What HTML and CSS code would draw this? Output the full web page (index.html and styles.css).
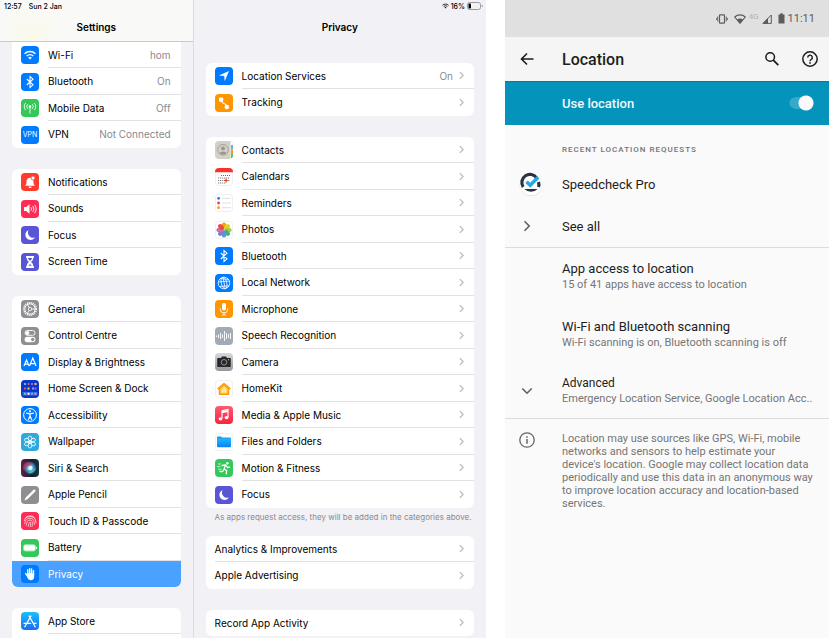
FILE: index.html
```html
<!DOCTYPE html>
<html lang="en">
<head>
<meta charset="utf-8">
<meta name="viewport" content="width=device-width, initial-scale=1">
<title>Privacy and location settings</title>
<link rel="stylesheet" href="styles.css">
</head>
<body>
<svg class="defs" aria-hidden="true">
  <defs>
    <linearGradient id="g-store" x2="0" y2="1"><stop stop-color="#1bc0fb"/><stop offset="1" stop-color="#1b6cf2"/></linearGradient>
    <linearGradient id="g-folder" x2="0" y2="1"><stop stop-color="#22b4fb"/><stop offset="1" stop-color="#0a84f5"/></linearGradient>
    <linearGradient id="g-home" x2="0" y2="1"><stop stop-color="#ffa31a"/><stop offset="1" stop-color="#ff9410"/></linearGradient>
    <radialGradient id="g-siri"><stop stop-color="#e8fbff"/><stop offset=".35" stop-color="#5cc4d8"/><stop offset=".7" stop-color="#3a6a9c"/><stop offset="1" stop-color="#241c3c"/></radialGradient>
  </defs>
  <symbol id="i-wifi" viewBox="0 0 18 18"><g fill="none" stroke="#fff" stroke-width="1.5"><path d="M3.6 7.7a7.7 7.7 0 0 1 10.8 0"/><path d="M5.7 10a4.8 4.8 0 0 1 6.6 0"/></g><path d="M9 13.6 7.2 11.7a2.6 2.6 0 0 1 3.6 0z" fill="#fff"/></symbol>
  <symbol id="i-bt" viewBox="0 0 18 18"><path d="M5.8 6 12 11.8 9 14.6V3.4l3 2.8L5.8 12" fill="none" stroke="#fff" stroke-width="1.1"/></symbol>
  <symbol id="i-moon" viewBox="0 0 18 18"><path d="M7.6 4a5.2 5.2 0 1 0 6.4 7.5A5.3 5.3 0 0 1 7.6 4z" fill="#fff"/></symbol>
  <symbol id="i-chev" viewBox="0 0 6 10"><path d="M1 1l4 4-4 4" fill="none" stroke="#b5b5b9" stroke-width="1.3"/></symbol>
</svg>

<div class="tablet">
  <aside class="sidebar">
    <header class="bar bar-side">
      <div class="status"><span>12:57</span><span>Sun 2 Jan</span></div>
      <h1 class="title">Settings</h1>
    </header>
    <nav class="groups">
      <div class="card card-first">
        <a class="row" href="#"><svg class="icon blue"><use href="#i-wifi"/></svg><span class="label">Wi-Fi<span class="value">hom</span></span></a>
        <a class="row" href="#"><svg class="icon blue"><use href="#i-bt"/></svg><span class="label">Bluetooth<span class="value">On</span></span></a>
        <a class="row" href="#"><svg class="icon green" viewBox="0 0 18 18"><g fill="none" stroke="#fff" stroke-width=".9"><path d="M9 8v6.5M6.7 5.3a3.4 3.4 0 0 0 0 4.5M11.3 5.3a3.4 3.4 0 0 1 0 4.5M4.7 4a5.2 5.2 0 0 0 0 7.2M13.3 4a5.2 5.2 0 0 1 0 7.2"/></g><circle cx="9" cy="7.5" r="1.3" fill="#fff"/></svg><span class="label">Mobile Data<span class="value">Off</span></span></a>
        <a class="row" href="#"><span class="icon blue vpn">VPN</span><span class="label">VPN<span class="value">Not Connected</span></span></a>
      </div>
      <div class="card">
        <a class="row" href="#"><svg class="icon red" viewBox="0 0 18 18"><path d="M4.2 12.8c1.2-1.2 1.2-2.2 1.3-4A3.6 3.6 0 0 1 9 4.8a3.6 3.6 0 0 1 3.5 4c.1 1.8.2 2.8 1.4 4zM7.6 13.4h3a1.5 1.5 0 0 1-3 0z" fill="#fff"/><circle cx="12" cy="5" r="2" fill="#fff" stroke="#ff3b30" stroke-width=".7"/></svg><span class="label">Notifications</span></a>
        <a class="row" href="#"><svg class="icon pink" viewBox="0 0 18 18"><path d="M3 7h2.2l3.3-2.8v9.6L5.2 11H3z" fill="#fff"/><g fill="none" stroke="#fff" stroke-width=".9"><path d="M10 7.3a3 3 0 0 1 0 3.4M11.8 6a5 5 0 0 1 0 6M13.6 4.8a7 7 0 0 1 0 8.4"/></g></svg><span class="label">Sounds</span></a>
        <a class="row" href="#"><svg class="icon indigo"><use href="#i-moon"/></svg><span class="label">Focus</span></a>
        <a class="row" href="#"><svg class="icon indigo" viewBox="0 0 18 18"><path d="M5 3h8v1.8h-.8c0 2.2-.7 3-2.2 4.2 1.5 1.2 2.2 2 2.2 4.2h.8V15H5v-1.8h.8c0-2.2.7-3 2.2-4.2-1.5-1.2-2.2-2-2.2-4.2H5z" fill="#fff"/><path d="M7 5h4c0 1.2-1 2-2 2.8C8 7 7 6.2 7 5zM7.3 12.8 9 11l1.7 1.8z" fill="#5856d6"/></svg><span class="label">Screen Time</span></a>
      </div>
      <div class="card">
        <a class="row" href="#"><svg class="icon grey" viewBox="0 0 18 18"><circle cx="9" cy="9" r="6.3" fill="none" stroke="#fff" stroke-width="1.5" stroke-dasharray="1.1 .88"/><circle cx="9" cy="9" r="5.2" fill="none" stroke="#fff" stroke-width="1"/><circle cx="9" cy="9" r="1.7" fill="none" stroke="#fff" stroke-width=".8"/><path d="M10.7 9h3.5M8.2 7.5 6.4 4.5M8.2 10.5l-1.8 3" stroke="#fff" stroke-width=".9"/></svg><span class="label">General</span></a>
        <a class="row" href="#"><svg class="icon grey" viewBox="0 0 18 18"><rect x="4" y="3.5" width="10" height="4.8" rx="2.4" fill="none" stroke="#fff" stroke-width=".9"/><circle cx="6.4" cy="5.9" r="2" fill="#fff"/><rect x="3.6" y="9.8" width="10.8" height="5.4" rx="2.7" fill="#fff"/><circle cx="11.7" cy="12.5" r="1.7" fill="#8e8e93"/></svg><span class="label">Control Centre</span></a>
        <a class="row" href="#"><svg class="icon blue" viewBox="0 0 18 18"><g fill="none" stroke="#fff" stroke-width="1.2"><path d="M3 13l2.5-6L8 13M3.9 11.2h3.2M8.5 13 11.8 5l3.3 8M9.7 10.6h4.2"/></g></svg><span class="label">Display &amp; Brightness</span></a>
        <a class="row" href="#"><svg class="icon navy" viewBox="0 0 18 18"><path d="M3 3h2v2H3zM11 7.5h2v2h-2z" fill="#5fb6f5"/><path d="M6.5 3h2v2h-2zM3 7.5h2v2H3z" fill="#e94b62"/><path d="M10 3h2v2h-2zM13.5 7.5h2v2h-2z" fill="#a25be8"/><path d="M13.5 3h2v2h-2zM6.5 7.5h2v2h-2z" fill="#f5cf39"/><path d="M1.5 12h15v3.5h-15z" fill="#3b63e8"/><path d="M3 12.7h2v2H3z" fill="#61d66a"/><path d="M6.5 12.7h2v2h-2z" fill="#fff"/><path d="M10 12.7h2v2h-2z" fill="#58bafb"/><path d="M13.5 12.7h2v2h-2z" fill="#f2a06b"/></svg><span class="label">Home Screen &amp; Dock</span></a>
        <a class="row" href="#"><svg class="icon blue" viewBox="0 0 18 18"><circle cx="9" cy="9" r="6.4" fill="none" stroke="#fff" stroke-width="1"/><circle cx="9" cy="5.3" r="1.1" fill="#fff"/><path d="M5.3 7.2 9 7.9l3.7-.7M9 7.6v2.5l-1.7 3.6M9 10.1l1.7 3.6" fill="none" stroke="#fff" stroke-width="1.2"/></svg><span class="label">Accessibility</span></a>
        <a class="row" href="#"><svg class="icon cyan" viewBox="0 0 18 18"><g fill="none" stroke="#fff" stroke-width=".8"><ellipse cx="9" cy="5.6" rx="1.9" ry="2.6"/><ellipse cx="9" cy="5.6" rx="1.9" ry="2.6" transform="rotate(60 9 9)"/><ellipse cx="9" cy="5.6" rx="1.9" ry="2.6" transform="rotate(120 9 9)"/><ellipse cx="9" cy="5.6" rx="1.9" ry="2.6" transform="rotate(180 9 9)"/><ellipse cx="9" cy="5.6" rx="1.9" ry="2.6" transform="rotate(240 9 9)"/><ellipse cx="9" cy="5.6" rx="1.9" ry="2.6" transform="rotate(300 9 9)"/><circle cx="9" cy="9" r="1.5"/></g></svg><span class="label">Wallpaper</span></a>
        <a class="row" href="#"><svg class="icon siri" viewBox="0 0 18 18"><circle cx="9" cy="9" r="7" fill="url(#g-siri)"/><path d="M3 5c3-3 6-2 8 0-3 1-6 3-8 7-1.500-2-1.300-5 0-7z" fill="#d3335f" opacity=".65"/><path d="M7 14c4 1 7-2 8-5-2 2-5 3-8 5z" fill="#3fe0b0" opacity=".8"/><circle cx="9.5" cy="9" r="2" fill="#fff" opacity=".8"/></svg><span class="label">Siri &amp; Search</span></a>
        <a class="row" href="#"><svg class="icon grey" viewBox="0 0 18 18"><path d="M3.4 14.6l1.3-3L12.6 3.7c1-1 2.7.7 1.7 1.7L6.4 13.3z" fill="#fff"/></svg><span class="label">Apple Pencil</span></a>
        <a class="row" href="#"><svg class="icon pink" viewBox="0 0 18 18"><g fill="none" stroke="#fff" stroke-width=".8" opacity=".85"><path d="M4 6.5a6 6 0 0 1 10 0M3.2 9a6 6 0 0 1 11.6 0v2.5M3.6 12C4.5 8 5.5 6.3 9 6.3S13.5 9 13.2 13M5.2 13.6C6 10.5 6 8 9 8s2.6 3.5 2 6.8M7 14.7C8 12.5 7.8 10 9 10s.6 3 .2 5"/></g></svg><span class="label">Touch ID &amp; Passcode</span></a>
        <a class="row" href="#"><svg class="icon green" viewBox="0 0 18 18"><rect x="2.5" y="5.8" width="12" height="6.2" rx="1.8" fill="#fff" stroke="#9be5ad" stroke-width="1"/><path d="M15.6 7.8v2.2" stroke="#fff" stroke-width="1"/></svg><span class="label">Battery</span></a>
        <a class="row selected" href="#" aria-current="page"><svg class="icon blue" viewBox="0 0 18 18"><path d="M6.8 9V4.7M8.7 8.5V3.6M10.6 8.5V4M12.5 9.5V5.7M4.7 8.6l2.5 3.5" fill="none" stroke="#fff" stroke-width="1.4" stroke-linecap="round"/><path d="M6.1 8.3h7.1v2.9c0 2.4-1.2 4-3.3 4-2.2 0-3.1-1.4-3.8-3.4z" fill="#fff"/></svg><span class="label">Privacy</span></a>
      </div>
      <div class="card">
        <a class="row" href="#"><svg class="icon" viewBox="0 0 18 18"><rect width="18" height="18" fill="url(#g-store)"/><path d="M9.9 4 5 12.7M8.1 4l5 8.7M3 11.3h6.7M12.4 11.3H15M4.5 13.7l-.6 1M13.5 13.7l.6 1" fill="none" stroke="#fff" stroke-width="1.3" stroke-linecap="round"/></svg><span class="label">App Store</span></a>
        <a class="row" href="#" aria-label="Wallet"></a>
      </div>
    </nav>
  </aside>

  <main class="detail">
    <header class="bar">
      <div class="status status-right">
        <svg class="st-wifi" viewBox="0 0 8 6"><path d="M.5 2.2a5 5 0 0 1 7 0M1.9 3.6a3 3 0 0 1 4.2 0" fill="none" stroke="#111"/><path d="M4 5.8 2.9 4.6a1.6 1.6 0 0 1 2.2 0z"/></svg>
        <span>16%</span>
        <svg class="st-batt" viewBox="0 0 16 8"><rect x=".5" y=".5" width="13" height="7" rx="2" fill="none" stroke="#9b9b9f"/><rect x="1.5" y="1.5" width="2.5" height="5" rx=".8"/><path d="M15.2 3v2" stroke="#9b9b9f"/></svg>
      </div>
      <h2 class="title">Privacy</h2>
    </header>
    <div class="groups">
      <div class="card">
        <a class="row" href="#"><svg class="icon blue" viewBox="0 0 18 18"><path d="M14 4 9.7 14.2 9.2 9 3.9 8.5z" fill="#fff"/></svg><span class="label">Location Services<span class="value">On</span><svg class="chev"><use href="#i-chev"/></svg></span></a>
        <a class="row" href="#"><svg class="icon orange" viewBox="0 0 18 18"><rect x="4" y="3.5" width="4.2" height="4.2" rx="1" fill="#fff"/><circle cx="11.8" cy="13" r="2.3" fill="#fff"/><path d="M6.5 7c.5 3.5 4.5 1.5 5 5" fill="none" stroke="#fff" stroke-width="1.3"/></svg><span class="label">Tracking<svg class="chev"><use href="#i-chev"/></svg></span></a>
      </div>
      <div class="card">
        <a class="row" href="#"><svg class="icon contacts" viewBox="0 0 18 18"><path d="M15.6 0H18v18h-2.4z" fill="#fff"/><path d="M16 4h2v4.5h-2z" fill="#58b8ee"/><path d="M16 8.5h2V13h-2z" fill="#f7981d"/><path d="M16 13h2v4h-2z" fill="#4fc85c"/><circle cx="8" cy="8.8" r="5.3" fill="none" stroke="#99968c" stroke-width=".8"/><circle cx="8" cy="7.4" r="1.9" fill="#99968c"/><path d="M4.5 12a3.8 2.5 0 0 1 7 0A5 5 0 0 1 4.5 12z" fill="#99968c"/></svg><span class="label">Contacts<svg class="chev"><use href="#i-chev"/></svg></span></a>
        <a class="row" href="#"><svg class="icon white" viewBox="0 0 18 18"><path d="M0 0h18v4.2H0z" fill="#fc3125"/><path d="M6 7.500h9M3.200 10h12M3.200 12.500h12M3.200 15h8" stroke="#666" stroke-width="1" stroke-dasharray="1 1"/><path d="M11 10.5v4M9.2 12.5h3.6" stroke="#fc3125" stroke-width="1.2"/></svg><span class="label">Calendars<svg class="chev"><use href="#i-chev"/></svg></span></a>
        <a class="row" href="#"><svg class="icon white" viewBox="0 0 18 18"><circle cx="3.6" cy="4.3" r="1.4" fill="#157efb"/><circle cx="3.6" cy="9" r="1.4" fill="#fc3d39"/><circle cx="3.6" cy="13.7" r="1.4" fill="#fd9426"/><path d="M7 4.3h9M7 9h9M7 13.7h9" stroke="#d7d7d9" stroke-width=".8"/></svg><span class="label">Reminders<svg class="chev"><use href="#i-chev"/></svg></span></a>
        <a class="row" href="#"><svg class="icon white" viewBox="0 0 18 18"><g opacity=".92"><ellipse cx="9" cy="4.9" rx="2.3" ry="3.5" fill="#f7941d"/><ellipse cx="9" cy="4.9" rx="2.3" ry="3.5" fill="#e9d000" transform="rotate(45 9 9)"/><ellipse cx="9" cy="4.9" rx="2.3" ry="3.5" fill="#9fc93c" transform="rotate(90 9 9)"/><ellipse cx="9" cy="4.9" rx="2.3" ry="3.5" fill="#39a968" transform="rotate(135 9 9)"/><ellipse cx="9" cy="4.9" rx="2.3" ry="3.5" fill="#4d8fd1" transform="rotate(180 9 9)"/><ellipse cx="9" cy="4.9" rx="2.3" ry="3.5" fill="#7a6fc0" transform="rotate(225 9 9)"/><ellipse cx="9" cy="4.9" rx="2.3" ry="3.5" fill="#bd6bad" transform="rotate(270 9 9)"/><ellipse cx="9" cy="4.9" rx="2.3" ry="3.5" fill="#ec3b35" transform="rotate(315 9 9)"/></g></svg><span class="label">Photos<svg class="chev"><use href="#i-chev"/></svg></span></a>
        <a class="row" href="#"><svg class="icon blue"><use href="#i-bt"/></svg><span class="label">Bluetooth<svg class="chev"><use href="#i-chev"/></svg></span></a>
        <a class="row" href="#"><svg class="icon blue" viewBox="0 0 18 18"><g fill="none" stroke="#fff" stroke-width=".8"><circle cx="9" cy="9" r="5.8"/><ellipse cx="9" cy="9" rx="2.7" ry="5.8" transform="rotate(-15 9 9)"/><path d="M3.4 8 14.5 7M4.5 12.5l9.5-.7M5.5 4.5l8 1M8 3.3l2.2 11.4"/></g></svg><span class="label">Local Network<svg class="chev"><use href="#i-chev"/></svg></span></a>
        <a class="row" href="#"><svg class="icon orange" viewBox="0 0 18 18"><rect x="7" y="3" width="4" height="7.5" rx="2" fill="#fff"/><path d="M5.2 8.3v.8a3.8 3.8 0 0 0 7.6 0v-.8M9 12.9v1.8M6.8 15h4.4" fill="none" stroke="#fff" stroke-width=".9"/></svg><span class="label">Microphone<svg class="chev"><use href="#i-chev"/></svg></span></a>
        <a class="row" href="#"><svg class="icon slate" viewBox="0 0 18 18"><path d="M1.5 8.5v1.5M3.5 7.5v3.5M5.5 6v6M7.5 7.5v3.5M9.5 4v10M11.5 6v6M13.5 7v4M15.5 6v6" stroke="#fff" stroke-width=".9"/></svg><span class="label">Speech Recognition<svg class="chev"><use href="#i-chev"/></svg></span></a>
        <a class="row" href="#"><svg class="icon silver" viewBox="0 0 18 18"><path d="M3 5h3l1-1.6h4L12 5h3a.8.8 0 0 1 .8.8v7.4a.8.8 0 0 1-.8.8H3a.8.8 0 0 1-.8-.8V5.8A.8.8 0 0 1 3 5z" fill="#27282b"/><circle cx="9" cy="9.3" r="2.8" fill="none" stroke="#b6b8ba" stroke-width=".7"/><circle cx="13.5" cy="6.7" r=".6" fill="#f6ba20"/></svg><span class="label">Camera<svg class="chev"><use href="#i-chev"/></svg></span></a>
        <a class="row" href="#"><svg class="icon white" viewBox="0 0 18 18"><path d="M9 2.5 16 8.5 15 9.6h-.8V15H3.8V9.6H3L2 8.5z" fill="url(#g-home)"/><path d="M9 5.8 12.5 8.7V13.5h-7V8.700z" fill="#ffdc70"/><path d="M9 7.8 11 9.5V12H7V9.5z" fill="#ffe994"/></svg><span class="label">HomeKit<svg class="chev"><use href="#i-chev"/></svg></span></a>
        <a class="row" href="#"><svg class="icon music" viewBox="0 0 18 18"><path d="M7 12.5V4.7l6-1.3v7.9" fill="none" stroke="#fff" stroke-width="1.1"/><path d="M7 5.2 13 4V6L7 7.3z" fill="#fff"/><ellipse cx="5.5" cy="12.8" rx="1.9" ry="1.6" fill="#fff"/><ellipse cx="11.5" cy="11.6" rx="1.9" ry="1.6" fill="#fff"/></svg><span class="label">Media &amp; Apple Music<svg class="chev"><use href="#i-chev"/></svg></span></a>
        <a class="row" href="#"><svg class="icon white" viewBox="0 0 18 18"><path d="M2 4.5c0-.6.3-.9.9-.9h3.3l1 .9h7.9c.6 0 .9.3.9.9V6H2z" fill="#14a0e8"/><path d="M2 5.4h14v7.9c0 .6-.3.9-.9.9H2.9c-.6 0-.9-.3-.9-.9z" fill="url(#g-folder)"/></svg><span class="label">Files and Folders<svg class="chev"><use href="#i-chev"/></svg></span></a>
        <a class="row" href="#"><svg class="icon green" viewBox="0 0 18 18"><circle cx="12.4" cy="4.2" r="1.3" fill="#fff"/><path d="M7.2 6.5 10.5 5.8 9.2 9.8l2.5 2-.5 3M9 10.5l-1.3 2H5M11 6.3l1.5 2.2 2.2-.4" fill="none" stroke="#fff" stroke-width="1.3" stroke-linecap="round" stroke-linejoin="round"/><path d="M3 5h3M2 7.6h3.5M3 10.2h3.5" stroke="#fff" stroke-width=".7"/></svg><span class="label">Motion &amp; Fitness<svg class="chev"><use href="#i-chev"/></svg></span></a>
        <a class="row" href="#"><svg class="icon indigo"><use href="#i-moon"/></svg><span class="label">Focus<svg class="chev"><use href="#i-chev"/></svg></span></a>
      </div>
      <p class="note">As apps request access, they will be added in the categories above.</p>
      <div class="card">
        <a class="row" href="#"><span class="label">Analytics &amp; Improvements<svg class="chev"><use href="#i-chev"/></svg></span></a>
        <a class="row" href="#"><span class="label">Apple Advertising<svg class="chev"><use href="#i-chev"/></svg></span></a>
      </div>
      <div class="card">
        <a class="row" href="#"><span class="label">Record App Activity<svg class="chev"><use href="#i-chev"/></svg></span></a>
      </div>
    </div>
  </main>
</div>

<section class="phone">
  <div class="p-status">
    <svg class="p-vib" viewBox="0 0 12 10"><rect x="3.5" y=".8" width="5" height="8.4" rx=".6" fill="none" stroke="#5c5c5c" stroke-width="1.2"/><path d="M1.7 2.5v5M10.3 2.5v5M.4 4v2M11.6 4v2" stroke="#5c5c5c" stroke-width=".9"/></svg>
    <svg class="p-wifi" viewBox="0 0 12 10"><path d="M.7 3C3.7.2 8.3.2 11.3 3L6 9.3z" fill="none" stroke="#5c5c5c" stroke-width="1.1"/><path d="M3 5.400a5.500 5.500 0 0 1 6 0L6 9.300z" fill="#5c5c5c"/></svg>
    <span class="p-4g">4G</span>
    <svg class="p-sig" viewBox="0 0 10 10"><path d="M1 9.4 9.3 1v8.4z" fill="none" stroke="#5c5c5c"/><path d="M.4 9.8 6 4v5.8z" fill="#5c5c5c"/></svg>
    <svg class="p-batt" viewBox="0 0 7 11"><path d="M.5 1.5H2.3V.2h2.4v1.3h1.800v9H.5z" fill="#5c5c5c"/></svg>
    <span class="p-time">11:11</span>
  </div>
  <header class="p-bar">
    <button class="p-btn" aria-label="Back"><svg viewBox="0 0 16 16"><path d="M14.5 8H2.5M8 2.5 2.500 8 8 13.500" fill="none" stroke="#1c1c1c" stroke-width="1.6"/></svg></button>
    <h1 class="p-title">Location</h1>
    <button class="p-btn" aria-label="Search"><svg viewBox="0 0 16 16"><circle cx="6.2" cy="6" r="4.3" fill="none" stroke="#1c1c1c" stroke-width="1.5"/><path d="m9.3 9.1 5 5" stroke="#1c1c1c" stroke-width="1.800"/></svg></button>
    <button class="p-btn" aria-label="Help"><svg viewBox="0 0 16 16"><circle cx="8" cy="8" r="7.2" fill="none" stroke="#1c1c1c" stroke-width="1.5"/><path d="M5.7 6.5a2.3 2.3 0 1 1 3.4 2c-.8.5-1.1.9-1.1 1.7" fill="none" stroke="#1c1c1c" stroke-width="1.4"/><path d="M7.2 11.2h1.6v1.5H7.2z" fill="#1c1c1c"/></svg></button>
  </header>
  <label class="p-switch"><span>Use location</span><input class="toggle" type="checkbox" role="switch" checked></label>
  <h2 class="p-head">RECENT LOCATION REQUESTS</h2>
  <a class="p-row" href="#"><svg class="p-app" viewBox="0 0 24 24"><circle cx="12" cy="12.5" r="11.5" fill="#e2e2e2"/><circle cx="12" cy="12" r="11.3" fill="#fff"/><path d="M4.2 15a8 8 0 0 1 13.500-9" fill="none" stroke="#2b3242" stroke-width="3.2"/><path d="M19.500 10a8 8 0 0 1 0 5" fill="none" stroke="#2b3242" stroke-width="3.2"/><path d="M5.3 17h13.4a9.6 9.6 0 0 1-13.4 0z" fill="#2b3242"/><path d="m7.5 9.8 3.7 3.5 8-8" fill="none" stroke="#27a9e1" stroke-width="3.6"/></svg><span class="p-name">Speedcheck Pro</span></a>
  <a class="p-row p-all p-line" href="#"><svg class="p-glyph" viewBox="0 0 16 16"><path d="m5.500 3.300 4.700 4.700-4.700 4.700" fill="none" stroke="#606060" stroke-width="1.6"/></svg><span class="p-name">See all</span></a>
  <a class="p-row p-two" href="#"><span class="p-text"><span>App access to location</span><span class="p-sub">15 of 41 apps have access to location</span></span></a>
  <a class="p-row p-two" href="#"><span class="p-text"><span>Wi-Fi and Bluetooth scanning</span><span class="p-sub">Wi-Fi scanning is on, Bluetooth scanning is off</span></span></a>
  <a class="p-row p-adv p-line" href="#"><svg class="p-glyph" viewBox="0 0 16 16"><path d="M3.3 5.5 8 10.2l4.7-4.7" fill="none" stroke="#606060" stroke-width="1.6"/></svg><span class="p-text"><span>Advanced</span><span class="p-sub">Emergency Location Service, Google Location Acc..</span></span></a>
  <div class="p-info">
    <svg class="p-glyph" viewBox="0 0 16 16"><circle cx="8" cy="8" r="7.2" fill="none" stroke="#666" stroke-width="1.3"/><path d="M8 7v4.800M8 4.200v1.600" stroke="#666" stroke-width="1.5"/></svg>
    <p>Location may use sources like GPS, Wi-Fi, mobile networks and sensors to help estimate your device's location. Google may collect location data periodically and use this data in an anonymous way to improve location accuracy and location-based services.</p>
  </div>
</section>
</body>
</html>
```
FILE: styles.css
```css
* { box-sizing: border-box; }

body {
  margin: 0;
  height: 100vh;
  padding-right: 1px;
  display: flex;
  gap: 19px;
  overflow: hidden;
  background: #fff;
}

h1, h2, p { margin: 0; }
a { color: inherit; text-decoration: none; }
svg { flex: none; display: block; }
.defs { position: absolute; width: 0; height: 0; }

/* Tablet */
.tablet {
  flex: 486 1 0;
  min-width: 0;
  display: flex;
  background: #f2f1f6;
  color: #000;
  font-family: Inter, "Liberation Sans", sans-serif;
  font-size: 10px;
}

.sidebar {
  flex: 193 1 0;
  min-width: 0;
  border-right: 1px solid #dcdce0;
}

.detail { flex: 293 1 0; min-width: 0; }

.bar { height: 42px; }

.bar-side {
  border-bottom: 1px solid #c9c9cb;
  background: radial-gradient(circle at 32px 34px, #fbf9ec, #f9f9f8 32px);
}

.status {
  height: 12px;
  padding: 0 4px;
  display: flex;
  align-items: center;
  gap: 7px;
  font-size: 7px;
  font-weight: 500;
}

.status-right { padding-right: 3px; justify-content: flex-end; gap: 2px; }
.st-wifi { width: 7px; height: 6px; }
.st-batt { width: 16px; height: 8px; }

.title {
  padding-top: 7px;
  font-size: 10px;
  line-height: 16px;
  font-weight: 600;
  text-align: center;
}

.groups { padding: 0 12px; }
.detail .groups { padding-top: 21px; }

.card {
  margin-bottom: 21px;
  border-radius: 6px;
  overflow: hidden;
  background: #fff;
}

.card-first { border-radius: 0 0 6px 6px; }

.row {
  height: 26px;
  padding-left: 9px;
  display: flex;
  align-items: center;
  gap: 9px;
}

.row:nth-child(even) { height: 27px; }

.label {
  flex: 1;
  align-self: stretch;
  padding-right: 10px;
  display: flex;
  align-items: center;
  border-bottom: 1px solid #e2e2e4;
}

.row:last-child .label { border-bottom-color: transparent; }
.value { margin-left: auto; color: #8a8a8e; }
.chev { width: 5px; height: 9px; margin-left: auto; }
.value + .chev { margin-left: 6px; }

.selected { background: #4ba1ff; color: #fff; }

.icon {
  flex: none;
  width: 18px;
  height: 18px;
  border-radius: 4px;
  overflow: hidden;
}

.blue { background: #007aff; }
.green { background: #34c759; }
.red { background: #ff3b30; }
.pink { background: #ff2d55; }
.indigo { background: #5856d6; }
.grey { background: #8e8e93; }
.navy { background: #0c35c9; }
.cyan { background: #2fa9dc; }
.orange { background: #ff9500; }
.slate { background: #a2aab5; }
.contacts { background: #d3d1c7; }
.siri { background: linear-gradient(90deg, #64203f, #181c2c 60%, #143c3c); }
.silver { background: linear-gradient(#d9d9dc, #96969b); }
.music { background: linear-gradient(#fb5c74, #fa233b); }
.white { background: #fff; box-shadow: inset 0 0 0 1px #f0f0f1; }

.vpn {
  color: #fff;
  font-size: 7px;
  line-height: 18px;
  text-align: center;
}

.note {
  height: 28px;
  margin-top: -21px;
  padding-left: 9px;
  color: #8a8a8e;
  font-size: 8px;
  line-height: 18px;
  white-space: nowrap;
}

/* Phone */
.phone {
  flex: 324 1 0;
  min-width: 0;
  background: #fafafa;
  color: #1d1d1d;
  font-family: Roboto, "Liberation Sans", sans-serif;
  font-size: 13px;
}

.p-status {
  height: 37px;
  padding-right: 14px;
  display: flex;
  align-items: center;
  justify-content: flex-end;
  gap: 6px;
  background: #e0e0e0;
  color: #5c5c5c;
}

.p-vib { width: 12px; height: 10px; }
.p-wifi { width: 12px; height: 10px; }
.p-4g { margin: 0 -3px; padding-bottom: 4px; color: #b0b0b0; font-size: 8px; line-height: 8px; }
.p-sig { width: 10px; height: 10px; }
.p-batt { width: 7px; height: 11px; }
.p-time { margin-left: -3px; font-size: 11px; }

.p-bar {
  height: 44px;
  padding: 0 11px 0 14px;
  display: flex;
  align-items: center;
  gap: 22px;
  background: #f5f5f5;
}

.p-btn {
  width: 16px;
  height: 16px;
  padding: 0;
  border: 0;
  background: none;
}

.p-title {
  flex: 1;
  padding-left: 5px;
  font-size: 16px;
  font-weight: 500;
}

.p-switch {
  height: 44px;
  padding: 0 15px 0 57px;
  display: flex;
  align-items: center;
  justify-content: space-between;
  background: #0393bb;
  box-shadow: inset 0 2px 1px -1px #0a7c9d;
  color: #f0fafc;
  font-weight: 500;
}

.toggle {
  appearance: none;
  width: 25px;
  height: 16px;
  margin: 0;
  background:
    radial-gradient(circle at 17px 8px, #fafafa 7px, transparent 8px),
    linear-gradient(#35a9c9, #35a9c9) 6px 2px / 14px 12px no-repeat,
    radial-gradient(circle at 6px 8px, #35a9c9 5px, transparent 6px);
}

.p-head {
  height: 38px;
  padding: 18px 0 0 57px;
  color: #737373;
  font-size: 8px;
  line-height: 14px;
  font-weight: 500;
  letter-spacing: 1px;
}

.p-row {
  height: 42px;
  padding: 0 14px;
  display: grid;
  grid-template-columns: 43px 1fr;
  align-items: center;
}

.p-line { border-bottom: 1px solid #dcdcdc; }
.p-all { height: 43px; }
.p-two { height: 58px; }
.p-adv { height: 55px; font-size: 12px; }
.p-app { width: 24px; height: 24px; }
.p-glyph { width: 16px; height: 16px; }
.p-name { grid-column: 2; }
.p-text { grid-column: 2; display: grid; line-height: 16px; white-space: nowrap; }
.p-sub { color: #757575; font-size: 11px; }

.p-info {
  padding: 13px 14px;
  display: grid;
  grid-template-columns: 43px 1fr;
  color: #757575;
  font-size: 11px;
  line-height: 13px;
}
```
